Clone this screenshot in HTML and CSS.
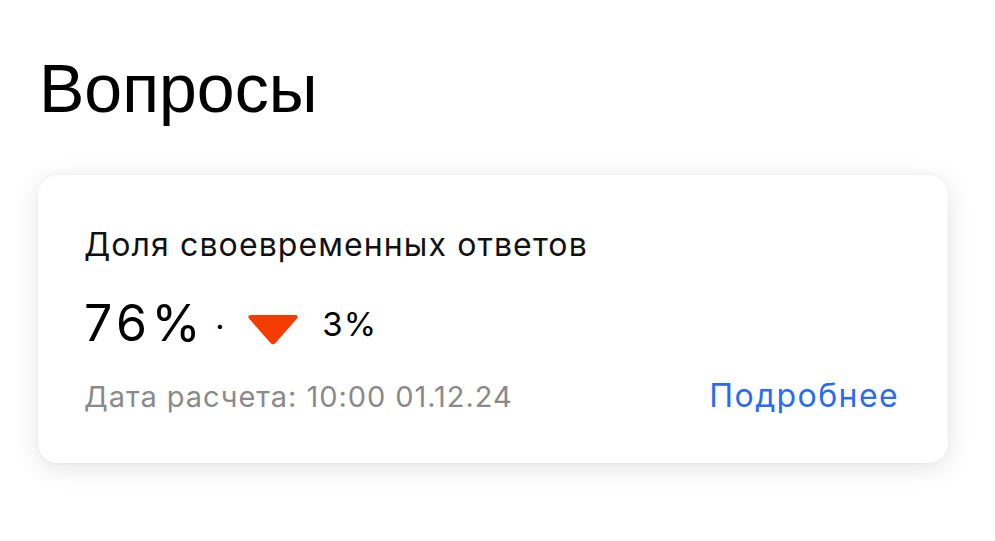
FILE: index.html
```html
<!DOCTYPE html>
<html lang="ru">
<head>
<meta charset="utf-8">
<link rel="stylesheet" href="styles.css">
</head>
<body>
<main class="page">
  <h1 class="title">Вопросы</h1>
  <section class="card">
    <h2 class="card-title">Доля своевременных ответов</h2>
    <div class="metric">
      <span class="value">76%</span>
      <span class="dot">·</span>
      <svg class="arrow" width="52" height="30" viewBox="0 0 52 30" aria-hidden="true">
        <path d="M4 0 H48 Q52 0 50 3.5 L28.5 28 Q26 30.5 23.5 28 L2 3.5 Q0 0 4 0 Z" fill="#f53c00"/>
      </svg>
      <span class="delta">3%</span>
    </div>
    <div class="footer">
      <span class="date">Дата расчета: 10:00 01.12.24</span>
      <a class="more" href="#">Подробнее</a>
    </div>
  </section>
</main>
</body>
</html>
```
FILE: styles.css
```css
html, body {
  margin: 0;
  padding: 0;
  background: #ffffff;
}
.page {
  padding: 51px 47px 40px 38px;
}
.title {
  margin: 0 0 0 1px;
  font-family: "Liberation Sans", Arial, sans-serif;
  font-weight: 400;
  font-size: 68px;
  line-height: 74px;
  color: #000;
}
.card {
  margin-top: 50px;
  box-sizing: border-box;
  width: 910px;
  height: 288px;
  border-radius: 20px;
  background: #fff;
  box-shadow: 0 5px 26px rgba(0, 0, 0, 0.11), 0 0 4px rgba(0, 0, 0, 0.04);
  padding: 50px 49px 0 46px;
  font-family: Inter, "Noto Sans", sans-serif;
}
.card-title {
  margin: 0;
  font-weight: 400;
  font-size: 32px;
  line-height: 40px;
  letter-spacing: 1.1px;
  color: #111;
}
.metric {
  margin-top: 28px;
  display: flex;
  align-items: flex-start;
  height: 60px;
}
.value {
  font-size: 50px;
  line-height: 60px;
  letter-spacing: 4.5px;
  color: #000;
}
.dot {
  margin: 14px 0 0 10px;
  font-size: 32px;
  line-height: 40px;
  color: #000;
}
.arrow {
  display: block;
  margin: 22px 0 0 23px;
}
.delta {
  margin: 11px 0 0 23px;
  font-size: 33px;
  line-height: 40px;
  letter-spacing: 1px;
  color: #000;
}
.footer {
  margin-top: 25px;
  display: flex;
  justify-content: space-between;
  align-items: baseline;
}
.date {
  font-size: 29px;
  line-height: 36px;
  letter-spacing: 0.95px;
  color: #8a8a8a;
}
.more {
  font-size: 32px;
  line-height: 36px;
  letter-spacing: 1.4px;
  color: #2b6bf2;
  text-decoration: none;
}
```
